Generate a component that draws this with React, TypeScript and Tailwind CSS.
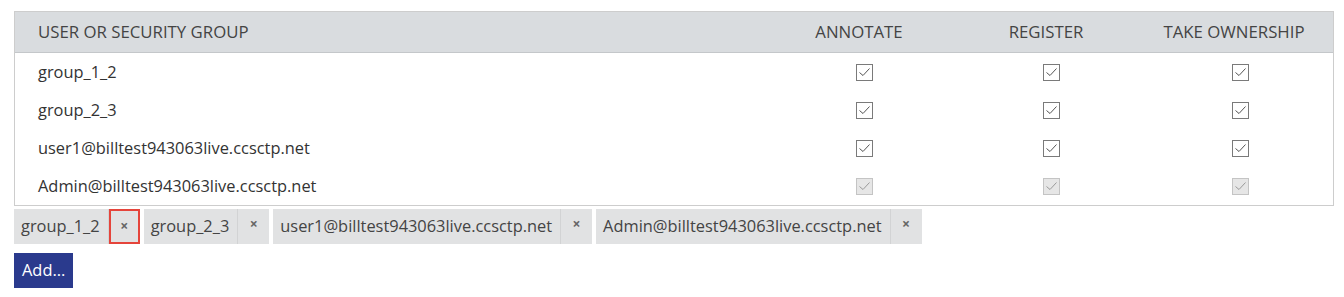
import React from 'react';

const ROWS = [
  { name: 'group_1_2', disabled: false },
  { name: 'group_2_3', disabled: false },
  { name: 'user1@billtest943063live.ccsctp.net', disabled: false },
  { name: 'Admin@billtest943063live.ccsctp.net', disabled: true },
];

const TAGS = ['group_1_2', 'group_2_3', 'user1@billtest943063live.ccsctp.net', 'Admin@billtest943063live.ccsctp.net'];

const Check: React.FC<{ disabled?: boolean }> = ({ disabled }) => (
  <span
    className={
      'inline-flex items-center justify-center w-[17px] h-[17px] border ' +
      (disabled ? 'bg-[#e6e6e6] border-[#c4c4c4]' : 'bg-white border-[#7a7a7a]')
    }
  >
    <svg width="13" height="13" viewBox="0 0 13 13" fill="none">
      <path
        d="M1.5 6.5 L5 9.5 L11.5 2.5"
        stroke={disabled ? '#9a9a9a' : '#555'}
        strokeWidth="1"
      />
    </svg>
  </span>
);

const App: React.FC = () => {
  return (
    <div className="w-[1344px] h-[297px] bg-white pt-[11px] pl-[14px] font-['Segoe_UI','Open_Sans',sans-serif] text-[16.4px] text-[#333]">
      <div className="w-[1320px] border border-[#cdcdcd]">
        <div className="grid grid-cols-[766px_166px_206px_1fr] h-[41px] bg-[#d9dcdf] border-b border-[#c4c7ca] text-[#444] text-[16.8px] uppercase items-center">
          <div className="pl-[23px]">User or Security Group</div>
          <div className="text-center pr-[10px]">Annotate</div>
          <div className="text-center pr-[8px]">Register</div>
          <div className="text-center pr-[18px]">Take Ownership</div>
        </div>
        {ROWS.map((r) => (
          <div key={r.name} className="grid grid-cols-[766px_166px_206px_1fr] h-[38px] items-center">
            <div className="pl-[23px]">{r.name}</div>
            <div className="flex justify-center"><Check disabled={r.disabled} /></div>
            <div className="flex justify-center pl-[2px]"><Check disabled={r.disabled} /></div>
            <div className="flex justify-center pr-[6px]"><Check disabled={r.disabled} /></div>
          </div>
        ))}
      </div>

      <div className="flex gap-[4px] mt-[3px] h-[35px]">
        {TAGS.map((t, i) => (
          <div key={t} className="flex bg-[#e1e2e3] text-[#444]">
            <span className="flex items-center pl-[7px] pr-[8px] border-r border-[#d2d3d4]">{t}</span>
            <span
              className={
                'flex justify-center pt-[4px] w-[31px] text-[14px] font-bold text-[#666] ' +
                (i === 0 ? 'border-2 border-[#e5443b] pt-[2px]' : '')
              }
            >
              ×
            </span>
          </div>
        ))}
      </div>

      <button className="mt-[9px] h-[35px] px-[8px] bg-[#2a3a8d] text-white text-[16.4px]">Add...</button>
    </div>
  );
};

export default App;
